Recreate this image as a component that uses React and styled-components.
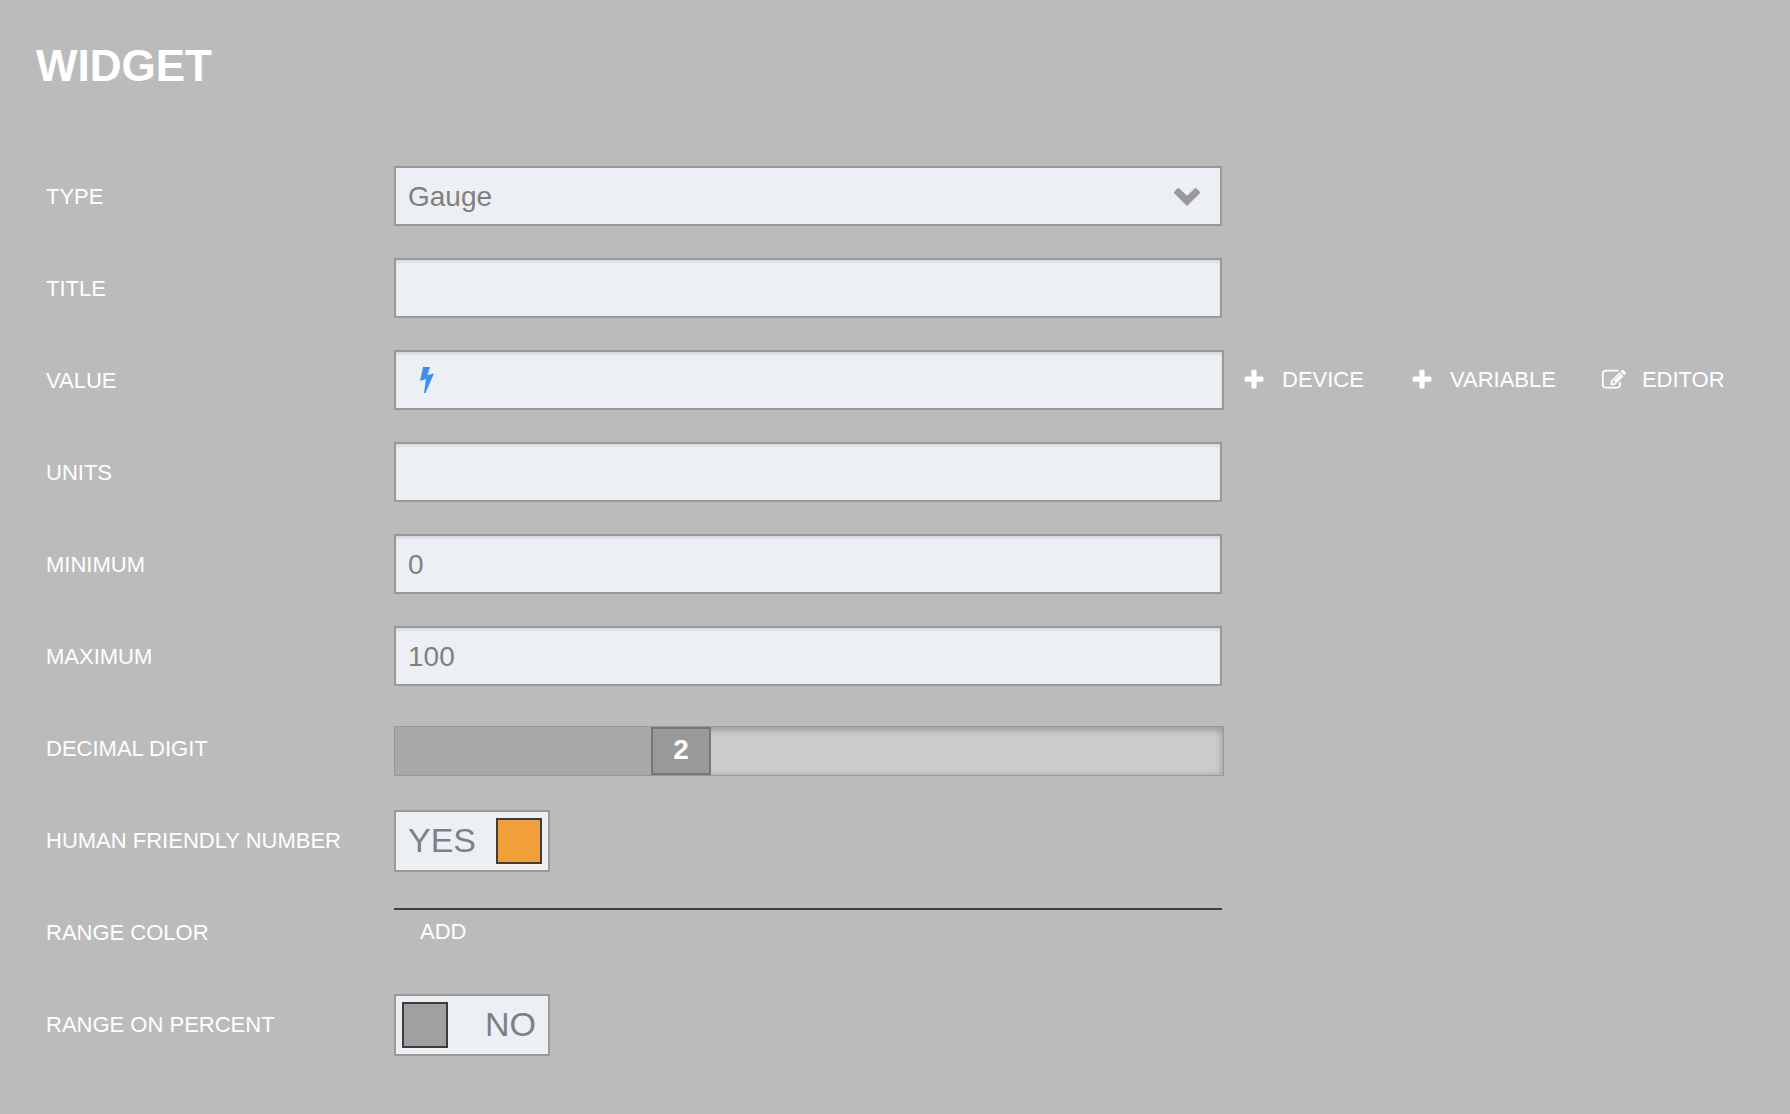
import React, { useState } from 'react';
import styled, { createGlobalStyle } from 'styled-components';

const GlobalStyle = createGlobalStyle`
  *,
  *::before,
  *::after {
    box-sizing: border-box;
  }

  body {
    margin: 0;
    background-color: #bbb;
    color: #fff;
    font-family: 'Liberation Sans', Arial, sans-serif;
    font-size: 22px;
  }

  input,
  select,
  button {
    margin: 0;
    border-radius: 0;
    font-family: inherit;
  }
`;

const THUMB_WIDTH = 60;

const Panel = styled.main`
  padding: 36px 36px 56px;
`;

const Title = styled.h1`
  margin: 0 0 70px;
  font-size: 44px;
  line-height: 60px;
  font-weight: bold;
`;

const Form = styled.form`
  display: flex;
  flex-direction: column;
  gap: 30px;
`;

const Row = styled.div`
  display: grid;
  grid-template-columns: 348px minmax(0, 830px) auto;
  column-gap: 10px;
  align-items: start;
  min-height: 62px;
`;

const Label = styled.label`
  padding-left: 10px;
  line-height: 62px;
`;

const Field = styled.div`
  display: grid;
  align-items: center;
  padding-right: ${({ $wide }) => ($wide ? '0' : '2px')};

  > * {
    grid-area: 1 / 1;
  }
`;

const TextInput = styled.input`
  width: 100%;
  height: 60px;
  padding: 2px 12px 0;
  border: 2px solid #999;
  outline: none;
  background-color: #ecf0f5;
  box-shadow: inset 0 2px 3px rgba(0, 0, 0, 0.1);
  color: #808080;
  font-size: 28px;
`;

const Select = styled.select`
  width: 100%;
  height: 60px;
  padding: 0 60px 0 12px;
  border: 2px solid #999;
  outline: none;
  appearance: none;
  background-color: #ecf0f5;
  color: #808080;
  font-size: 28px;
`;

const SelectArrow = styled.svg`
  justify-self: end;
  width: 26px;
  height: 20px;
  margin-right: 22px;
  fill: #999;
  pointer-events: none;
`;

const Bolt = styled.svg`
  width: 14px;
  height: 26px;
  margin-left: 26px;
  fill: #3f8fee;
  pointer-events: none;
`;

const Actions = styled.div`
  display: flex;
  gap: 46px;
  padding-left: 8px;
`;

const Action = styled.button`
  display: flex;
  align-items: center;
  gap: 16px;
  height: 60px;
  padding: 0;
  border: 0;
  background: none;
  color: #fff;
  font-size: 22px;
  white-space: nowrap;
  cursor: pointer;
`;

const ActionIcon = styled.svg`
  width: 24px;
  height: 24px;
  fill: currentColor;
`;

const Track = styled.div`
  display: grid;
  height: 50px;
  margin-top: 8px;
  border: 1px solid #999;
  background-color: #ccc;
  box-shadow: inset 0 2px 8px rgba(0, 0, 0, 0.3);

  > * {
    grid-area: 1 / 1;
  }
`;

const TrackFill = styled.div`
  background-color: #a9a9a9;
`;

const Range = styled.input`
  width: 100%;
  height: 48px;
  appearance: none;
  outline: none;
  background: transparent;

  &::-webkit-slider-thumb {
    width: ${THUMB_WIDTH}px;
    height: 48px;
    appearance: none;
    border: 2px solid #777;
    background-color: #999;
  }
`;

const RangeValue = styled.output`
  width: ${THUMB_WIDTH}px;
  font-size: 28px;
  line-height: 46px;
  font-weight: bold;
  text-align: center;
  pointer-events: none;
`;

const Switch = styled.label`
  display: flex;
  flex-direction: ${({ $on }) => ($on ? 'row' : 'row-reverse')};
  align-items: center;
  justify-content: space-between;
  width: 156px;
  height: 62px;
  padding: ${({ $on }) => ($on ? '0 6px 0 12px' : '0 12px 0 6px')};
  border: 2px solid #999;
  background-color: #ecf0f5;
  color: #808080;
  font-size: 34px;
  cursor: pointer;
`;

const SwitchText = styled.span`
  padding-bottom: 2px;
`;

const SwitchBox = styled.input`
  width: 46px;
  height: 46px;
  appearance: none;
  border: 2px solid #3d3d3d;
  background-color: #a0a0a0;

  &:checked {
    background-color: #f19f38;
  }
`;

const RangeColors = styled.div`
  margin: 6px 2px 0 0;
  border-top: 2px solid #3d3d3d;
`;

const AddButton = styled.button`
  height: 44px;
  padding: 0 26px;
  border: 0;
  background: none;
  color: #fff;
  font-size: 22px;
  cursor: pointer;
`;

const PlusIcon = () => (
  <ActionIcon viewBox="0 0 1792 1792" aria-hidden="true">
    <path d="M1600 736v192q0 40-28 68t-68 28h-416v416q0 40-28 68t-68 28h-192q-40 0-68-28t-28-68v-416h-416q-40 0-68-28t-28-68v-192q0-40 28-68t68-28h416v-416q0-40 28-68t68-28h192q40 0 68 28t28 68v416h416q40 0 68 28t28 68z" />
  </ActionIcon>
);

const EditIcon = () => (
  <ActionIcon viewBox="0 0 1792 1792" aria-hidden="true">
    <path d="M888 1184l116-116-152-152-116 116v56h96v96h56zm440-720q-16-16-33 1l-350 350q-17 17-1 33t33-1l350-350q17-17 1-33zm80 594v190q0 119-84.5 203.5t-203.5 84.5h-832q-119 0-203.5-84.5t-84.5-203.5v-832q0-119 84.5-203.5t203.5-84.5h832q63 0 117 25 15 7 18 23 3 17-9 29l-49 49q-14 14-32 8-23-6-45-6h-832q-66 0-113 47t-47 113v832q0 66 47 113t113 47h832q66 0 113-47t47-113v-126q0-13 9-22l64-64q15-15 35-7t20 29zm-96-738l288 288-672 672h-288v-288zm444 132l-92 92-288-288 92-92q28-28 68-28t68 28l152 152q28 28 28 68t-28 68z" />
  </ActionIcon>
);

const TextRow = ({ id, label, defaultValue }) => (
  <Row>
    <Label htmlFor={id}>{label}</Label>
    <Field>
      <TextInput id={id} type="text" defaultValue={defaultValue} />
    </Field>
  </Row>
);

const SliderRow = ({ id, label, max, initial }) => {
  const [value, setValue] = useState(initial);
  const offset = `calc((100% - ${THUMB_WIDTH}px) * ${value / max})`;

  return (
    <Row>
      <Label htmlFor={id}>{label}</Label>
      <Track>
        <TrackFill style={{ width: offset }} />
        <Range
          id={id}
          type="range"
          min="0"
          max={max}
          value={value}
          onChange={e => setValue(Number(e.target.value))}
        />
        <RangeValue htmlFor={id} style={{ marginLeft: offset }}>
          {value}
        </RangeValue>
      </Track>
    </Row>
  );
};

const SwitchRow = ({ id, label, initial }) => {
  const [on, setOn] = useState(initial);

  return (
    <Row>
      <Label htmlFor={id}>{label}</Label>
      <Switch $on={on}>
        <SwitchText>{on ? 'YES' : 'NO'}</SwitchText>
        <SwitchBox
          id={id}
          type="checkbox"
          checked={on}
          onChange={() => setOn(!on)}
        />
      </Switch>
    </Row>
  );
};

const App = () => (
  <>
    <GlobalStyle />
    <Panel>
      <Title>WIDGET</Title>
      <Form onSubmit={e => e.preventDefault()}>
        <Row>
          <Label htmlFor="type">TYPE</Label>
          <Field>
            <Select id="type" defaultValue="gauge">
              <option value="gauge">Gauge</option>
            </Select>
            <SelectArrow viewBox="0 -2 26 20" aria-hidden="true">
              <path d="M.4 3.400 3.400.4q1-.8 2 0L13 7.800 20.600.4q1-.8 2 0l3 3q.8 1 0 2L13 18 .4 5.400q-.8-1 0-2z" />
            </SelectArrow>
          </Field>
        </Row>
        <TextRow id="title" label="TITLE" />
        <Row>
          <Label htmlFor="value">VALUE</Label>
          <Field $wide>
            <TextInput id="value" type="text" />
            <Bolt viewBox="0 0 14 26" aria-hidden="true">
              <path d="M3 0h7L7.500 8 14 6.500 5.500 26H4L6 12 0 14z" />
            </Bolt>
          </Field>
          <Actions>
            <Action type="button">
              <PlusIcon />
              DEVICE
            </Action>
            <Action type="button">
              <PlusIcon />
              VARIABLE
            </Action>
            <Action type="button">
              <EditIcon />
              EDITOR
            </Action>
          </Actions>
        </Row>
        <TextRow id="units" label="UNITS" />
        <TextRow id="minimum" label="MINIMUM" defaultValue="0" />
        <TextRow id="maximum" label="MAXIMUM" defaultValue="100" />
        <SliderRow id="decimal" label="DECIMAL DIGIT" max={6} initial={2} />
        <SwitchRow id="human" label="HUMAN FRIENDLY NUMBER" initial />
        <Row>
          <Label as="span">RANGE COLOR</Label>
          <RangeColors>
            <AddButton type="button">ADD</AddButton>
          </RangeColors>
        </Row>
        <SwitchRow id="percent" label="RANGE ON PERCENT" initial={false} />
      </Form>
    </Panel>
  </>
);

export default App;
